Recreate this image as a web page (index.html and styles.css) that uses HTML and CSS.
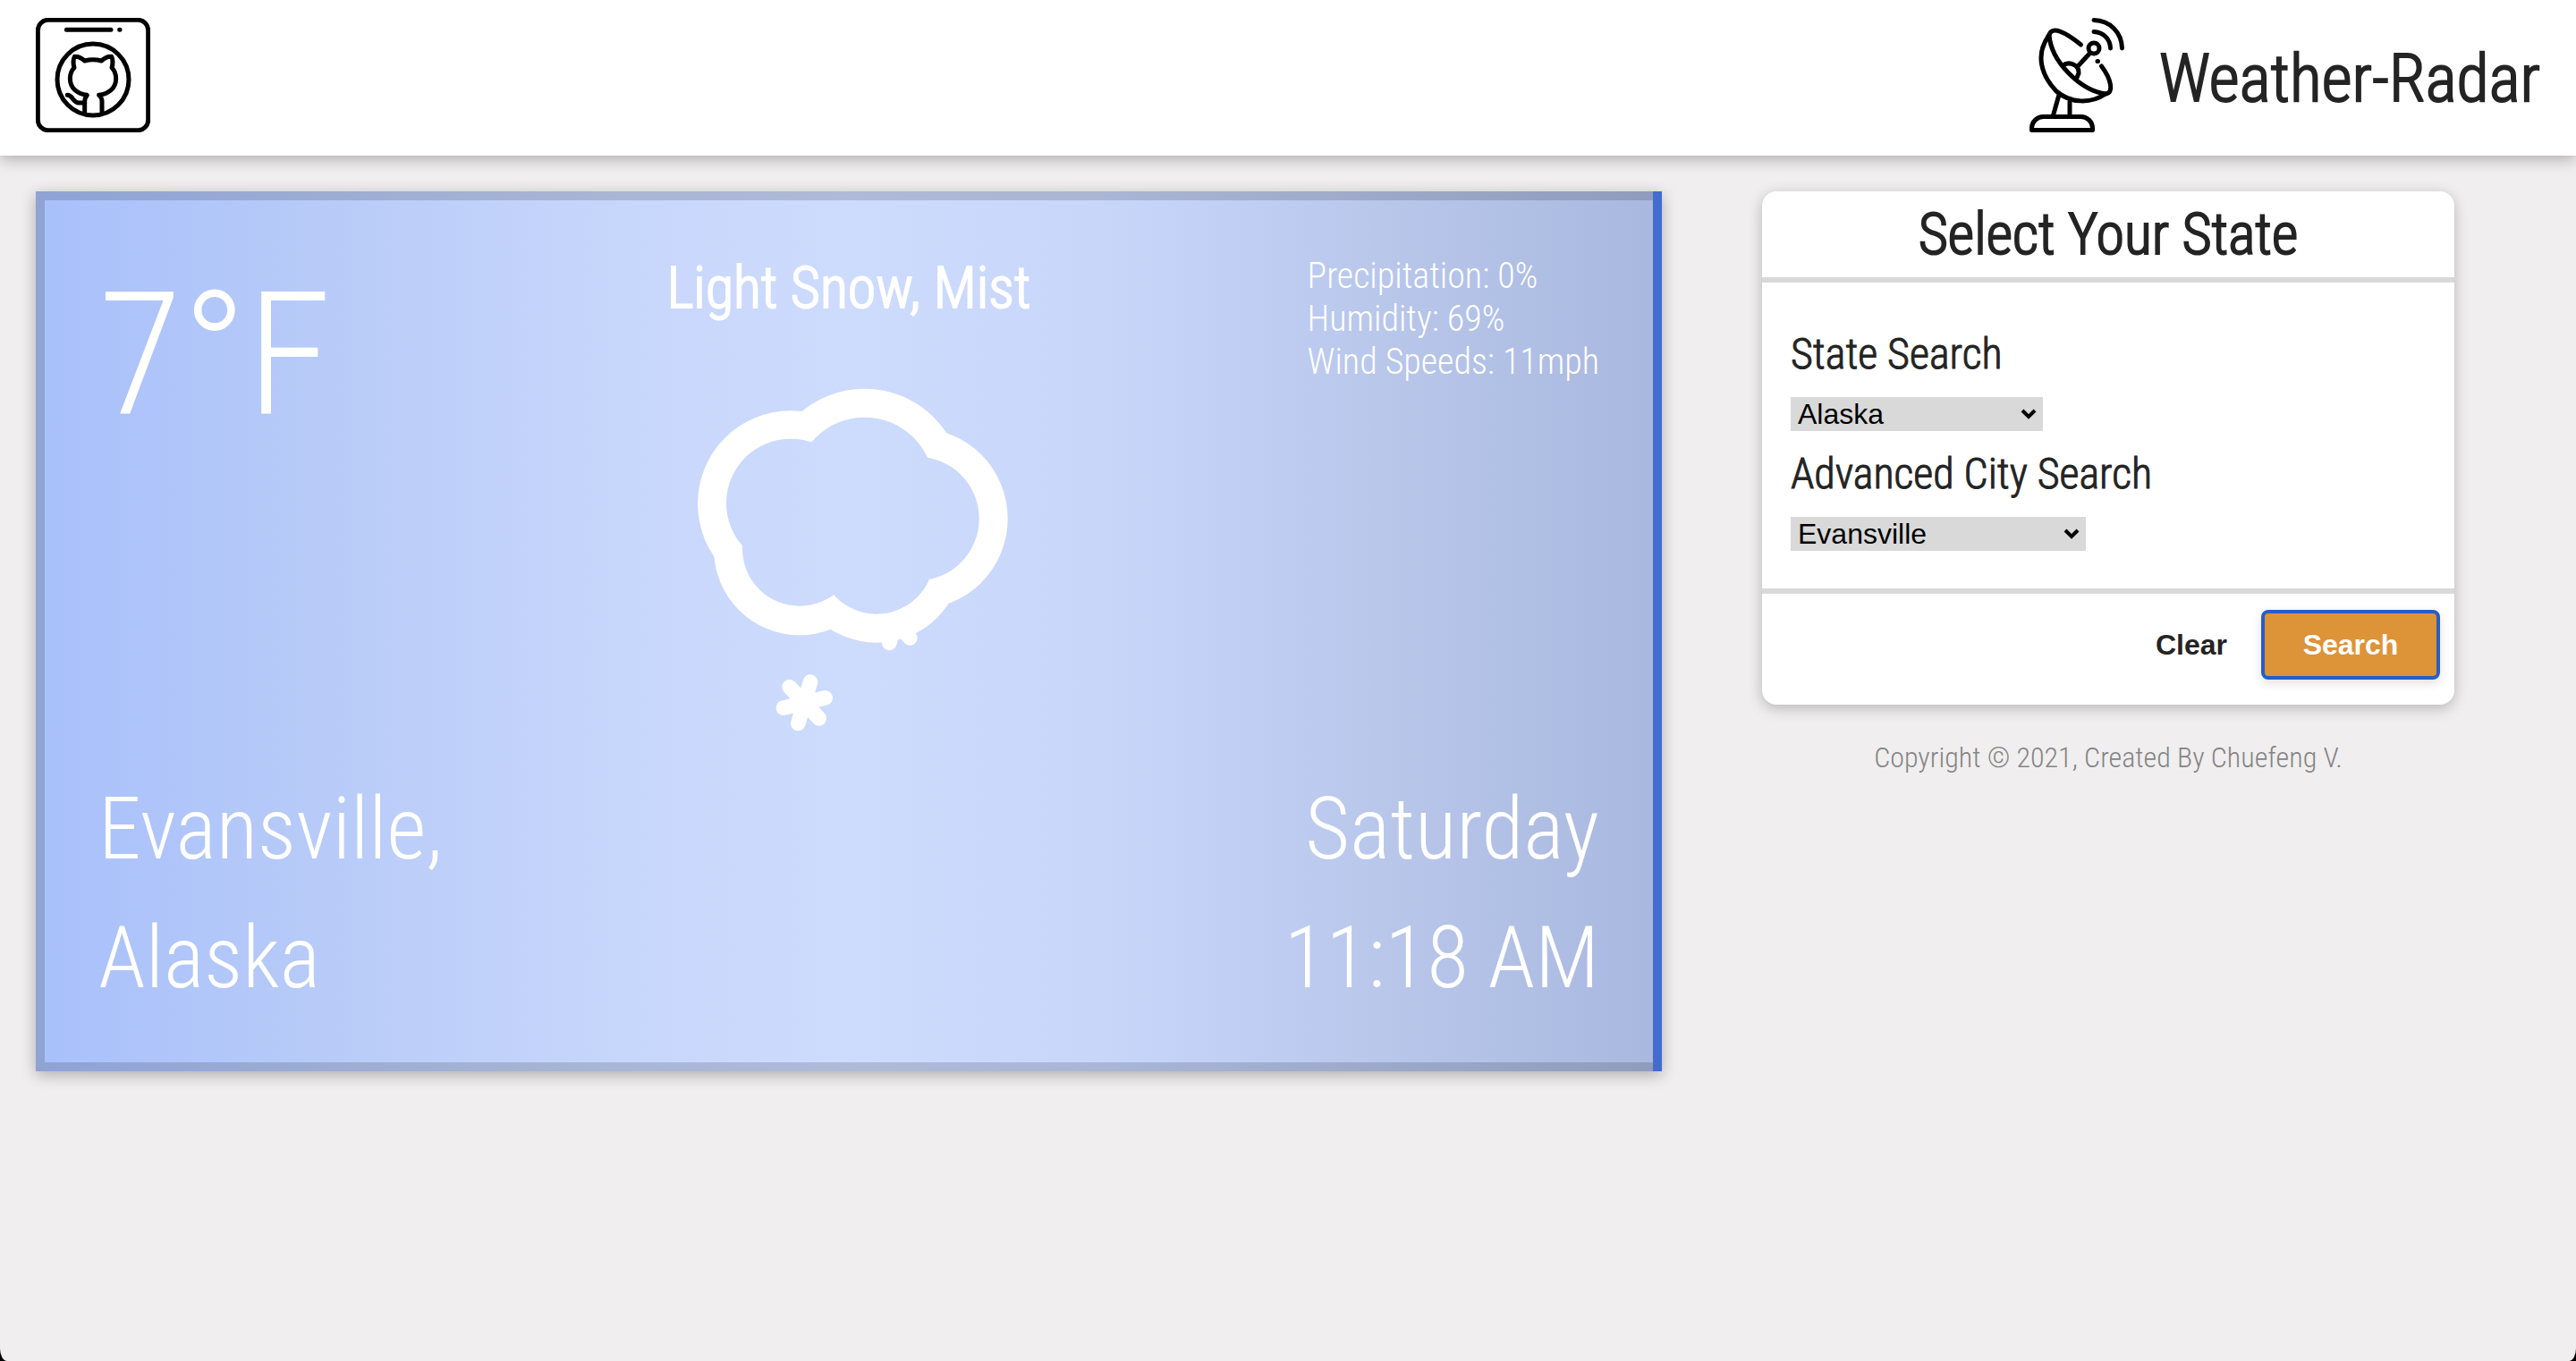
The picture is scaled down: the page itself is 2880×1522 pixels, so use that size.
FILE: index.html
```html
<!DOCTYPE html>
<html lang="en">
<head>
<meta charset="utf-8">
<meta name="viewport" content="width=device-width, initial-scale=1">
<title>Weather-Radar</title>
<link rel="stylesheet" href="styles.css">
</head>
<body>
<header class="navbar">
  <a class="repo-link" href="#" aria-label="GitHub repository">
    <svg class="nav-icon" viewBox="120 60 384 384" fill="none" stroke="#000" stroke-width="15" stroke-linecap="round" stroke-linejoin="round">
      <rect x="127" y="67" width="370" height="370" rx="34"/>
      <path d="M223 100H372M401 100H402"/>
      <circle cx="312" cy="267" r="120"/>
      <path d="M284 376V340C284 330 288 324 292 319C262 315 235 298 235 264C235 248 240 236 249 227C245 214 245 201 250 190C262 188 272 194 284 204C302 199 322 199 340 204C352 194 362 188 374 190C379 201 379 214 375 227C384 236 389 248 389 264C389 298 362 315 332 319C338 324 342 330 342 340V376"/>
      <path d="M226 319C244 319 244 344 264 345H284"/>
    </svg>
  </a>
  <div class="brand">
    <svg class="nav-icon" viewBox="18 20 128 128" fill="none" stroke="#000" stroke-width="5" stroke-linecap="round" stroke-linejoin="round" aria-hidden="true">
      <path d="M31.500 145.500V143A13 13 0 0 1 44.500 130.500H86.500A13 13 0 0 1 99.500 143V145.500Z"/>
      <path d="M62 106L55.500 129M74 114V129"/>
      <path d="M51 39C35 61 42 84 59 102C75 116 98 116 114 105C86 101 53 69 51 39Z"/>
      <path d="M51 39C54 29 68 35 86.500 50M109.500 74C120 88 124 104 114 105"/>
      <path d="M66 73C74 68 85 73 84 82L81 89M84 73L97 59"/>
      <circle cx="101" cy="54" r="6"/>
      <path d="M101 35.500C111 36 119 43 119.500 54M101 22.500C119 23 132 36 132.500 54M105 68.500H105.500"/>
    </svg>
    <h1 class="brand-name">Weather-Radar</h1>
  </div>
</header>
<main class="content">
  <section class="weather-frame">
    <div class="weather">
      <div class="weather-top">
        <p class="temperature">7°F</p>
        <div class="condition">
          <p class="condition-text">Light Snow, Mist</p>
          <svg class="condition-icon" viewBox="0 0 1320 1320" role="img" aria-label="Snow cloud">
            <mask id="cloud" maskUnits="userSpaceOnUse" x="0" y="0" width="1320" height="1320">
              <g fill="#fff">
                <circle cx="432" cy="490" r="312"/><circle cx="680" cy="432" r="328"/><circle cx="856" cy="540" r="304"/><circle cx="720" cy="667" r="289"/><circle cx="462" cy="643" r="288"/>
              </g>
              <g fill="#000">
                <circle cx="432" cy="488" r="216"/><circle cx="680" cy="432" r="232"/><circle cx="856" cy="540" r="208"/><circle cx="720" cy="667" r="193"/><circle cx="462" cy="641" r="192"/>
              </g>
            </mask>
            <rect width="1320" height="1320" fill="#fff" mask="url(#cloud)"/>
            <path d="M498 1088L457 1227M428 1105L527 1210M548 1141L408 1175M763 957L772 920M832 940L800 905" stroke="#fff" stroke-width="50" stroke-linecap="round" fill="none"/>
          </svg>
        </div>
        <ul class="details">
          <li>Precipitation: 0%</li>
          <li>Humidity: 69%</li>
          <li>Wind Speeds: 11mph</li>
        </ul>
      </div>
      <div class="weather-bottom">
        <p>Evansville,<br>Alaska</p>
        <p class="when">Saturday<br>11:18 AM</p>
      </div>
    </div>
  </section>
  <aside class="sidebar">
    <form class="search-card">
      <h2 class="search-title">Select Your State</h2>
      <div class="search-fields">
        <label for="state">State Search</label>
        <div class="select-wrap state">
          <select id="state"><option>Alaska</option></select>
          <svg class="chevron" viewBox="0 0 18 12"><path d="M2 2L9 9L16 2" fill="none" stroke="#000" stroke-width="4"/></svg>
        </div>
        <label for="city">Advanced City Search</label>
        <div class="select-wrap city">
          <select id="city"><option>Evansville</option></select>
          <svg class="chevron" viewBox="0 0 18 12"><path d="M2 2L9 9L16 2" fill="none" stroke="#000" stroke-width="4"/></svg>
        </div>
      </div>
      <div class="search-actions">
        <button class="clear" type="reset">Clear</button>
        <button class="search" type="button">Search</button>
      </div>
    </form>
    <footer class="copyright">Copyright © 2021, Created By Chuefeng V.</footer>
  </aside>
</main>
</body>
</html>
```

FILE: styles.css
```css
* {
  box-sizing: border-box;
  margin: 0;
  padding: 0;
}

html {
  background: #000;
}

body {
  min-height: 100vh;
  background: #f0eeef;
  border-radius: 0 0 8px 8px / 0 0 14px 14px;
  color: #242424;
  font-family: "Roboto Condensed", Roboto, sans-serif;
  font-weight: 300;
}

.navbar {
  display: flex;
  justify-content: space-between;
  padding: 20px 40px 26px;
  background: #fff;
  box-shadow: 0 4px 16px rgba(0, 0, 0, 0.28);
}

.repo-link,
.nav-icon {
  display: block;
}

.nav-icon {
  width: 128px;
  height: 128px;
}

.brand {
  display: flex;
  align-items: flex-end;
  gap: 28px;
}

.brand-name {
  font-size: 74px;
  font-weight: 300;
  line-height: 120px;
  -webkit-text-stroke: 2px currentColor;
}

.content {
  display: grid;
  grid-template-columns: 1818fr 774fr;
  column-gap: 112px;
  align-items: start;
  padding: 40px 136px 40px 40px;
}

.weather-frame {
  border-right: 10px solid #436cd0;
  box-shadow: 0 4px 16px rgba(0, 0, 0, 0.28);
}

.weather {
  padding: 61px 60px 45px;
  border: 10px solid rgba(0, 0, 0, 0.15);
  border-right: 0;
  background: linear-gradient(90deg, #a8c0fb 0%, #b8cbf8 18%, #c7d6fb 36%, #cddbfd 50%, #c8d6fa 66%, #c0cef3 75%, #b8c6ea 84%, #a9b8df 100%) border-box;
  color: #fff;
}

.weather-top {
  display: grid;
  grid-template-columns: 1fr auto 1fr;
  align-items: start;
}

.temperature {
  font-size: 192px;
  line-height: 224px;
}

.condition {
  display: flex;
  flex-direction: column;
  align-items: center;
}

.condition-text {
  font-size: 64px;
  line-height: 76px;
  -webkit-text-stroke: 2px currentColor;
}

.condition-icon {
  display: block;
  width: 440px;
  height: 440px;
  margin: 39px 0 15px 22px;
}

.details {
  justify-self: end;
  list-style: none;
  font-size: 40px;
  line-height: 48px;
}

.weather-bottom {
  display: flex;
  justify-content: space-between;
  font-size: 96px;
  line-height: 144px;
}

.when {
  text-align: right;
}

.search-card {
  border-radius: 16px;
  background: #fff;
  box-shadow: 0 4px 16px rgba(0, 0, 0, 0.24);
}

.search-title {
  padding: 9px 0 7px;
  border-bottom: 6px solid #d9d9d9;
  font-size: 64px;
  font-weight: 300;
  line-height: 80px;
  text-align: center;
  -webkit-text-stroke: 2px currentColor;
}

.search-fields {
  display: flex;
  flex-direction: column;
  padding: 48px 32px 42px;
  font-size: 48px;
  line-height: 64px;
}

.search-fields label {
  -webkit-text-stroke: 1px currentColor;
}

.select-wrap {
  position: relative;
  display: flex;
  height: 38px;
  margin: 16px 0;
}

.select-wrap.city {
  margin-bottom: 0;
}

.state {
  width: 282px;
}

.city {
  width: 330px;
}

.select-wrap select {
  appearance: none;
  width: 100%;
  padding: 0 8px;
  border: 0;
  border-radius: 0;
  background: #d9d9d9;
  color: #000;
  font: 32px/38px "Liberation Sans", Arial, sans-serif;
}

.chevron {
  position: absolute;
  right: 7px;
  top: 13px;
  width: 18px;
  height: 12px;
  pointer-events: none;
}

.search-actions {
  display: flex;
  justify-content: flex-end;
  gap: 18px;
  padding: 18px 16px 28px;
  border-top: 6px solid #d9d9d9;
}

.search-actions button {
  height: 78px;
  border: 0;
  font: bold 32px/38px "Liberation Sans", Arial, sans-serif;
}

.search-actions .clear {
  padding: 0 20px;
  background: none;
  color: #242424;
}

.search-actions .search {
  width: 200px;
  border: 4px solid #265dc8;
  border-radius: 8px;
  background: #dd9338;
  box-shadow: 0 4px 12px rgba(0, 0, 0, 0.12);
  color: #fff;
}

.copyright {
  margin-top: 40px;
  color: #848484;
  font-size: 32px;
  line-height: 38px;
  text-align: center;
}
```
